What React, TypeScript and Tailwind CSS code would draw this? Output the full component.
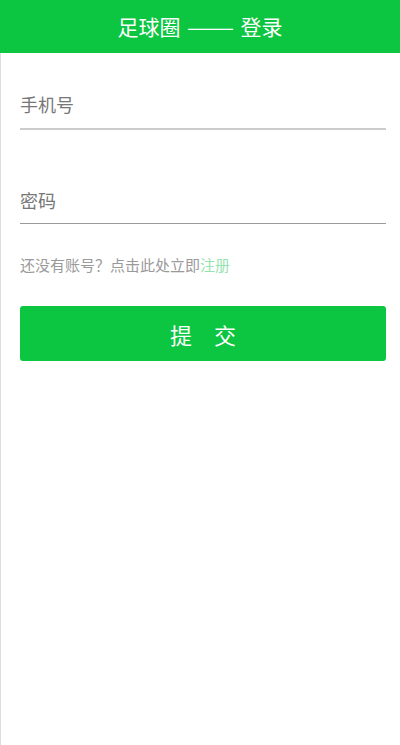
const font = { fontFamily: '"Noto Sans CJK SC", "Liberation Sans", sans-serif' };

export default function App() {
  return (
    <div className="w-[400px] h-[745px] bg-white flex flex-col" style={font}>
      {/* Header */}
      <header className="h-[53px] bg-[#0cc540] flex items-center justify-center shrink-0">
        <h1 className="text-[21px] text-white leading-none flex items-center">
          <span>足球圈</span>
          <span className="inline-block w-[60px] text-center">
            <span className="inline-block scale-x-[1.35]">——</span>
          </span>
          <span>登录</span>
        </h1>
      </header>

      <main className="flex-1 border-l border-[#dcdde3] pl-[19px] pr-[14px] pt-[38px]">
        {/* Phone */}
        <div className="h-[39px] pt-[4px] border-b-2 border-[#cccccc] flex items-start">
          <span className="text-[18px] text-[#777777] leading-none">手机号</span>
        </div>

        {/* Password */}
        <div className="mt-[61px] h-[33px] border-b border-[#9a9a9a] flex items-start">
          <span className="text-[18px] text-[#777777] leading-none">密码</span>
        </div>

        <p className="mt-[33px] text-[15px] text-[#9a9a9a] leading-none">
          还没有账号？点击此处立即<span className="text-[#95e4b0]">注册</span>
        </p>

        <button className="mt-[34px] w-full h-[55px] rounded-[3px] bg-[#0cc540] text-white text-[22px] leading-none">
          提　交
        </button>
      </main>
    </div>
  );
}
